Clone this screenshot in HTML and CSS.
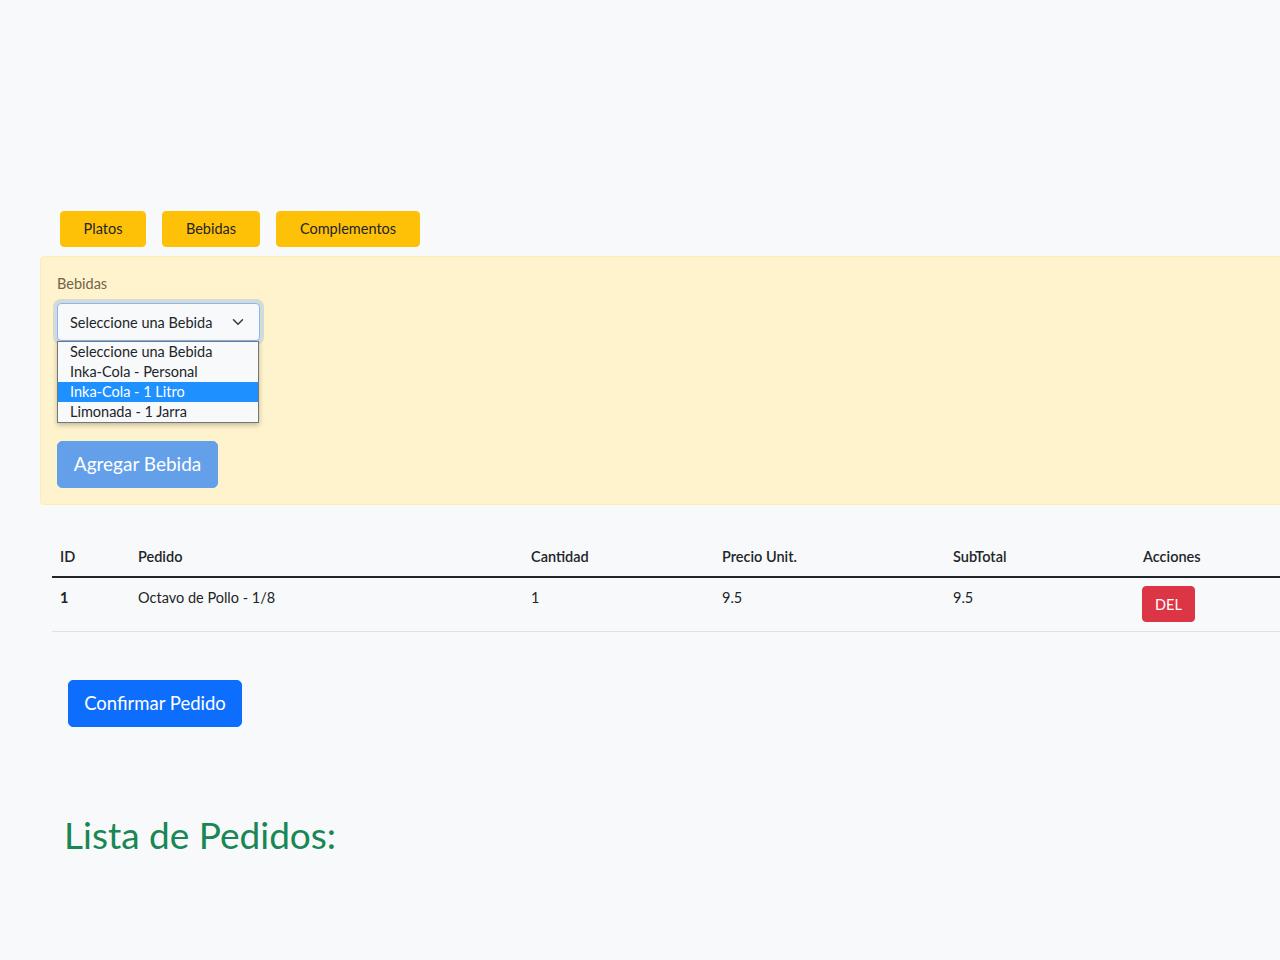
FILE: index.html
```html
<!DOCTYPE html>
<html lang="es">
<head>
<meta charset="utf-8">
<title>Pedidos</title>
<link rel="stylesheet" href="styles.css">
</head>
<body>
<main class="page">
  <nav class="tabs">
    <button class="tab tab-platos">Platos</button>
    <button class="tab tab-bebidas">Bebidas</button>
    <button class="tab tab-comp">Complementos</button>
  </nav>

  <section class="panel">
    <label class="panel-label">Bebidas</label>
    <div class="select-wrap">
      <div class="select">
        <span>Seleccione una Bebida</span>
        <svg class="chev" width="12" height="12" viewBox="0 0 16 16"><path d="M2 5l6 6 6-6" fill="none" stroke="#343a40" stroke-width="2" stroke-linecap="round" stroke-linejoin="round"/></svg>
      </div>
      <ul class="options">
        <li>Seleccione una Bebida</li>
        <li>Inka-Cola - Personal</li>
        <li class="active">Inka-Cola - 1 Litro</li>
        <li>Limonada - 1 Jarra</li>
      </ul>
    </div>
    <button class="btn-add">Agregar Bebida</button>
  </section>

  <table class="orders">
    <colgroup>
      <col class="c-id"><col class="c-ped"><col class="c-cant"><col class="c-pre"><col class="c-sub"><col class="c-acc">
    </colgroup>
    <thead>
      <tr><th>ID</th><th>Pedido</th><th>Cantidad</th><th>Precio Unit.</th><th>SubTotal</th><th>Acciones</th></tr>
    </thead>
    <tbody>
      <tr><th>1</th><td>Octavo de Pollo - 1/8</td><td>1</td><td>9.5</td><td>9.5</td><td><button class="btn-del">DEL</button></td></tr>
    </tbody>
  </table>

  <div class="confirm-row">
    <button class="btn-confirm">Confirmar Pedido</button>
  </div>

  <h1 class="list-title">Lista de Pedidos:</h1>
</main>
</body>
</html>
```

FILE: styles.css
```css
html, body {
  margin: 0;
  padding: 0;
  background: #f8f9fa;
  overflow-x: hidden;
}
body {
  font-family: Lato, "Noto Sans", sans-serif;
  color: #212529;
  font-size: 14px;
}
.page {
  padding-top: 211px;
  width: 1400px;
}
.tabs {
  display: flex;
  gap: 16px;
  padding-left: 60px;
  margin-bottom: 9px;
}
.tab {
  font-family: inherit;
  font-size: 14.5px;
  color: #212529;
  background: #ffc107;
  border: 1px solid #ffc107;
  border-radius: 4px;
  height: 36px;
  padding: 0 0 1px;
  text-align: center;
}
.tab-platos { width: 86px; }
.tab-bebidas { width: 98px; }
.tab-comp { width: 144px; }
.panel {
  margin-left: 40px;
  background: #fff3cd;
  border: 1px solid #ffecb5;
  border-radius: 4px;
  height: 249px;
  padding: 18px 16px 0;
  box-sizing: border-box;
  display: flex;
  flex-direction: column;
  align-items: flex-start;
}
.panel-label {
  color: #6f6547;
  font-size: 14.5px;
  line-height: 20px;
  margin-top: -1px;
  margin-bottom: 9px;
}
.select-wrap {
  position: relative;
  width: 203px;
  height: 38px;
}
.select {
  box-sizing: border-box;
  height: 38px;
  width: 203px;
  border: 1px solid #86b7fe;
  border-radius: 4px;
  background: #f8f9fa;
  box-shadow: 0 0 0 4px rgba(13, 110, 253, 0.18);
  display: flex;
  align-items: center;
  justify-content: space-between;
  padding: 0 15px 0 12px;
  font-size: 14.5px;
  color: #212529;
}
.chev { display: block; }
.options {
  position: absolute;
  left: 0;
  top: 38px;
  width: 202px;
  margin: 0;
  padding: 0;
  list-style: none;
  background: #f8f9fa;
  border: 1px solid #767676;
  box-sizing: border-box;
  box-shadow: 0 2px 5px rgba(0,0,0,0.25);
  z-index: 2;
}
.options li {
  height: 20px;
  line-height: 20px;
  padding-left: 12px;
  font-size: 14.5px;
  color: #212529;
}
.options li.active {
  background: #1e90ff;
  color: #fff;
}
.btn-add {
  margin-top: 100px;
  font-family: inherit;
  font-size: 19px;
  color: #fff;
  background: #64a0ea;
  border: 1px solid #64a0ea;
  border-radius: 5px;
  height: 47px;
  width: 161px;
  padding: 0 0 2px;
}
.orders {
  margin: 28px 0 0 52px;
  border-collapse: collapse;
  table-layout: fixed;
  width: 1300px;
}
.c-id { width: 78px; }
.c-ped { width: 393px; }
.c-cant { width: 191px; }
.c-pre { width: 231px; }
.c-sub { width: 190px; }
.c-acc { width: 217px; }
.orders th, .orders td {
  text-align: left;
  padding: 8px;
  font-size: 14.5px;
  vertical-align: top;
}
.orders thead th {
  font-weight: 600;
  height: 24px;
  padding-top: 12px;
  padding-bottom: 7px;
  border-bottom: 2px solid #212529;
  line-height: 24px;
}
.orders tbody th, .orders tbody td {
  padding-top: 10px;
  padding-bottom: 8px;
  line-height: 20px;
  border-bottom: 1px solid #dee2e6;
  height: 35px;
}
.orders tbody th { font-weight: 700; }
.btn-del {
  font-family: inherit;
  font-size: 14.5px;
  color: #fff;
  background: #dc3545;
  border: 1px solid #dc3545;
  border-radius: 4px;
  height: 36px;
  width: 53px;
  padding: 0;
  margin-left: -1px;
  margin-top: -2px;
}
.confirm-row {
  padding: 48px 0 0 68px;
}
.btn-confirm {
  font-family: inherit;
  font-size: 18.5px;
  color: #fff;
  background: #0d6efd;
  border: 1px solid #0d6efd;
  border-radius: 5px;
  height: 47px;
  width: 174px;
  padding: 0 0 2px;
}
.list-title {
  margin: 84px 0 0 64px;
  font-weight: 400;
  font-size: 37px;
  line-height: 48px;
  color: #198754;
}
```
